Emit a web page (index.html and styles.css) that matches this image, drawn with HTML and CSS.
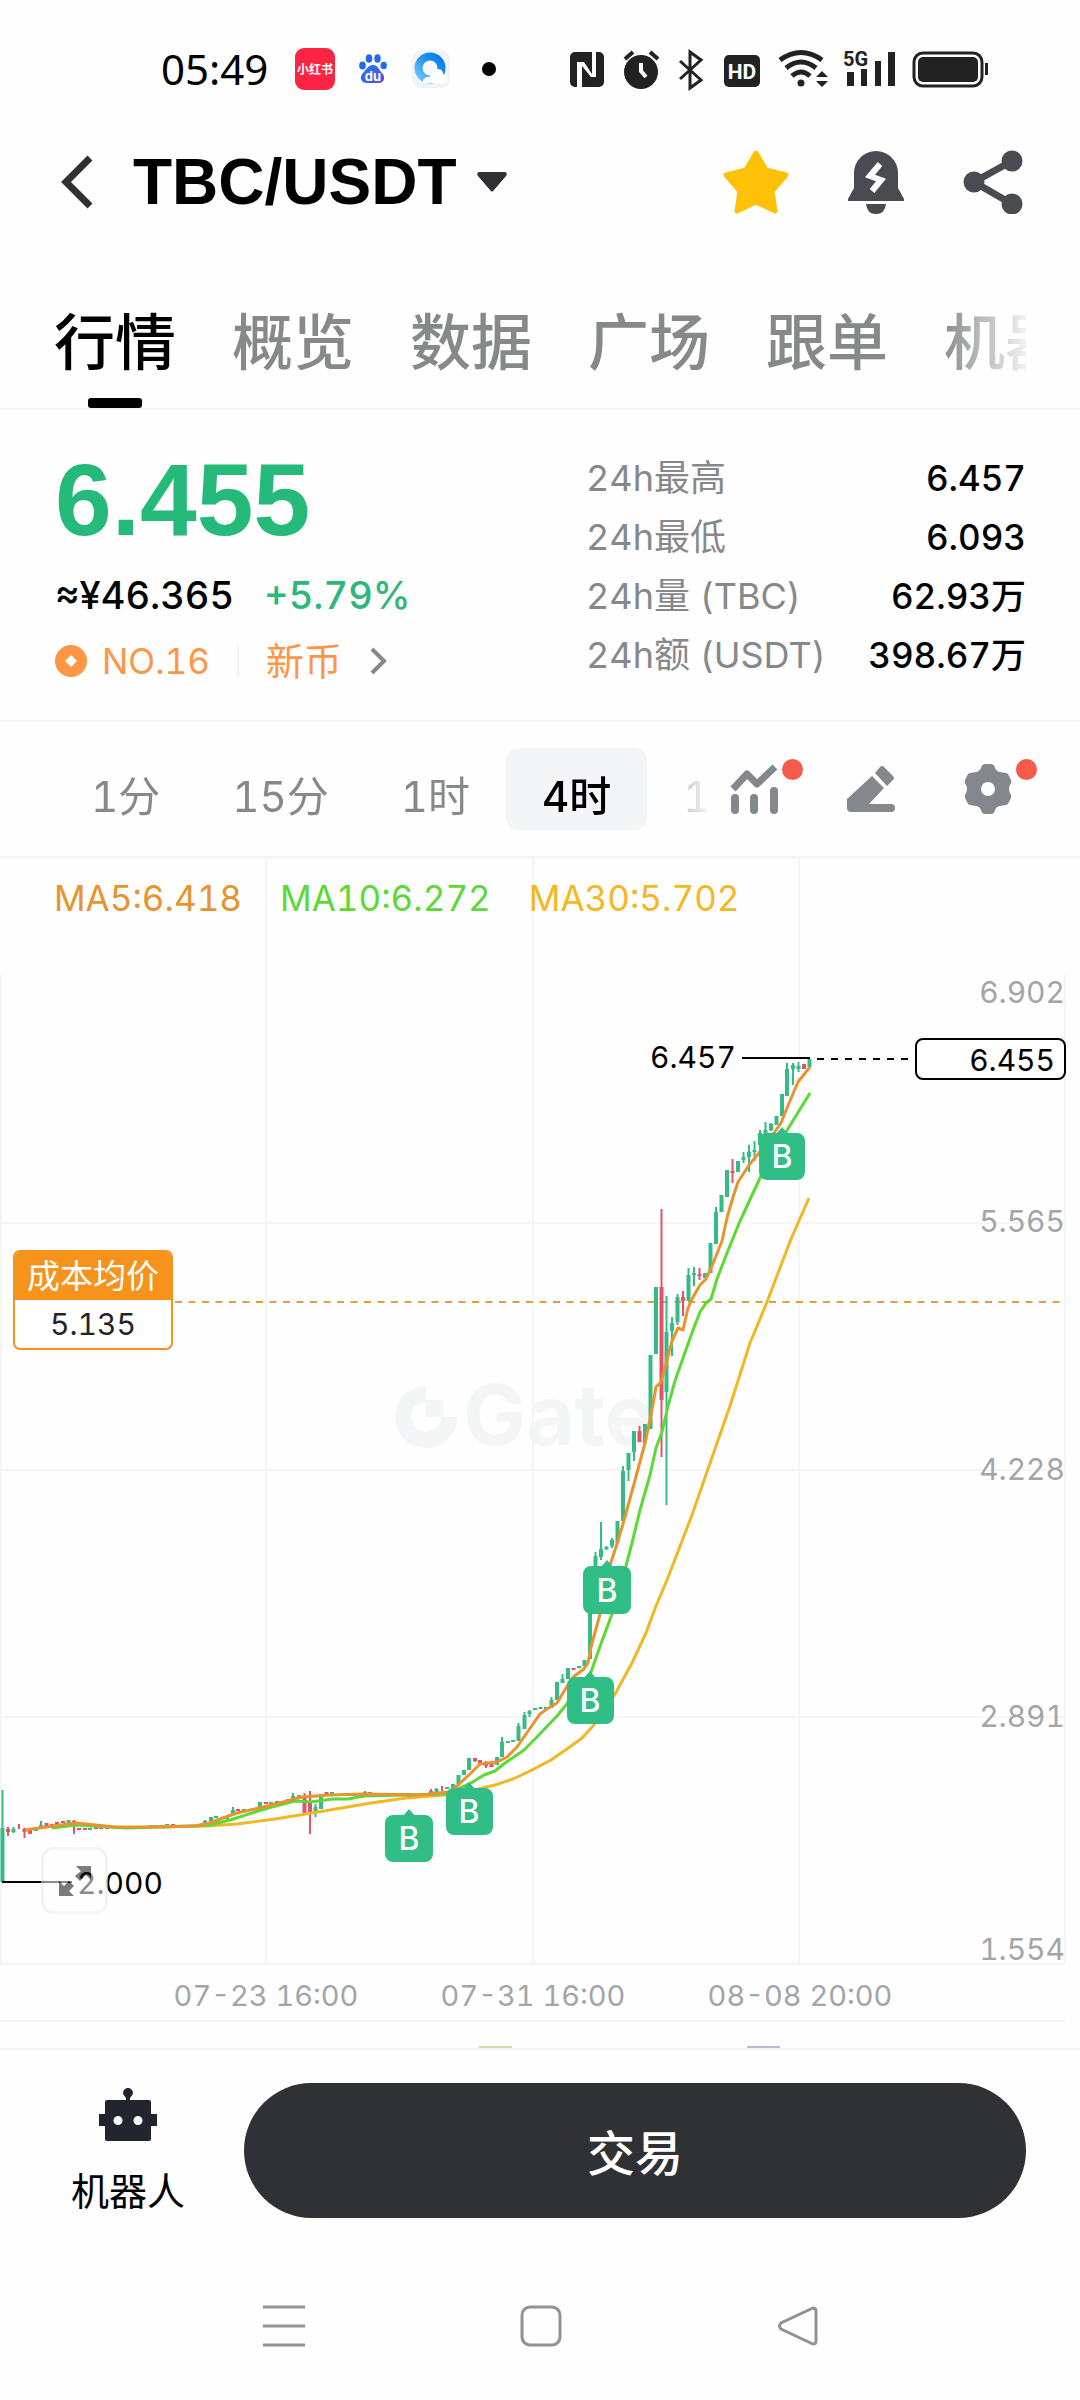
FILE: index.html
```html
<!DOCTYPE html>
<html lang="zh-CN">
<head>
<meta charset="utf-8">
<meta name="viewport" content="width=device-width, initial-scale=1">
<title>TBC/USDT</title>
<link rel="stylesheet" href="styles.css">
</head>
<body>
<div class="status">
  <div class="status-left">
    <time class="clock">05:49</time>
    <svg class="app-red" width="40" height="42" viewBox="0 0 40 42"><rect width="40" height="42" rx="9" fill="#fb2543"/><text x="20" y="26" text-anchor="middle" class="red-text">小红书</text></svg>
    <svg width="28" height="30" viewBox="0 0 28 30"><defs><linearGradient id="paw" x1="0" y1="0" x2="1" y2="1"><stop offset="0" stop-color="#1f7af0"/><stop offset="1" stop-color="#5a4be0"/></linearGradient></defs><g fill="#2468ee"><ellipse cx="3.5" cy="11.500" rx="3.300" ry="4"/><ellipse cx="10" cy="4.500" rx="3.300" ry="4.300"/><ellipse cx="18.500" cy="4.500" rx="3.200" ry="4.300"/><ellipse cx="24.700" cy="11.500" rx="3.200" ry="3.800"/></g><path d="M14 11c5 0 6 5 9 8 4 4 2 10-3 10H8c-6 0-8-6-4-10 3-3 5-8 10-8z" fill="url(#paw)"/><text x="14" y="27" text-anchor="middle" class="du-text">du</text></svg>
    <svg width="40" height="40" viewBox="0 0 40 40"><defs><linearGradient id="ring" x1="0" y1="1" x2="1" y2="0"><stop offset="0" stop-color="#6fc8fa"/><stop offset=".6" stop-color="#1f8fee"/><stop offset="1" stop-color="#0a7be6"/></linearGradient></defs><rect x="1" y="1" width="38" height="38" rx="9" fill="#f1f4f6"/><circle cx="19" cy="19" r="11.500" fill="#f6fafc" stroke="url(#ring)" stroke-width="8"/><path d="M12 33c0-4 4-6 7-5 1-5 4-8 8-8 4 0 5 3 5 5 6 1 6 9 0 9H15c-2 0-3-1-3-1z" fill="#fdfeff"/></svg>
    <i class="more-dot"></i>
  </div>
  <svg class="status-icons" width="420" height="46" viewBox="568 46 420 46" fill="#222">
    <path fill-rule="evenodd" d="M575 52h17v22l-8-12h-7v25h-2a5 5 0 0 1-5-5V57a5 5 0 0 1 5-5zM596 52h3a5 5 0 0 1 5 5v25a5 5 0 0 1-5 5h-17V66l9 11h5z"/>
    <circle cx="641" cy="72" r="17"/><path d="M641 63v8l5 6" fill="none" stroke="#fff" stroke-width="4"/><path d="M625 59l8-7M658 59l-8-7" stroke="#222" stroke-width="4"/>
    <path d="M680 61l21 19-11 8V52l11 8-21 19" fill="none" stroke="#222" stroke-width="3"/>
    <rect x="724" y="55" width="36" height="32" rx="5"/><text x="742" y="79" text-anchor="middle" class="hd-text">HD</text>
    <g fill="none" stroke="#222" stroke-width="5"><path d="M780 60q21-15 42 0"/><path d="M786 68q15-12 30 0"/><path d="M792 76q9-8 18 0"/></g><circle cx="801" cy="83" r="3.500"/><path d="M816 77l6-6 6 6zM816 81h12l-6 6z"/>
    <text x="843" y="66" class="net-text">5G</text><path d="M847 72h7v14h-7zM861 69h6v17h-6zM875 61h6v25h-6zM888 52h7v34h-7z"/>
    <rect x="914" y="53" width="68" height="33" rx="9" fill="none" stroke="#222" stroke-width="3"/><rect x="918" y="57" width="60" height="25" rx="5"/><rect x="985" y="63" width="3" height="12"/>
  </svg>
</div>

<header class="header">
  <button class="plain" aria-label="返回"><svg width="32" height="54" viewBox="0 0 32 54"><path d="M29 3L5 27l24 24" fill="none" stroke="#303134" stroke-width="7"/></svg></button>
  <button class="plain pair">TBC/USDT<svg width="30" height="21" viewBox="0 0 30 21"><path d="M2 0h26q3 1 1 4L17 18q-2 3-4 0L1 4Q-1 1 2 0z" fill="#303134"/></svg></button>
  <div class="header-tools">
    <button class="plain" aria-label="收藏"><svg width="66" height="64" viewBox="0 0 66 64"><path d="M33 3l10 17 20 5-14 16 3 20-19-9-19 9 3-20L3 25l20-5z" fill="#ffc107" stroke="#ffc107" stroke-width="5" stroke-linejoin="round"/></svg></button>
    <button class="plain" aria-label="提醒"><svg width="56" height="64" viewBox="0 0 56 64"><path d="M6 38V23a22 22 0 0 1 44 0v15l6 11v2H0v-2zM18 54h20q-1 10-10 10T18 54z" fill="#494b51"/><path d="M32 14L22 26l11 4-9 11" fill="none" stroke="#fff" stroke-width="6"/></svg></button>
    <button class="plain" aria-label="分享"><svg width="60" height="64" viewBox="0 0 60 64"><path d="M49 11L11 32l38 22" fill="none" stroke="#494b51" stroke-width="7"/><g fill="#494b51"><circle cx="11" cy="32" r="10.500"/><circle cx="49" cy="11" r="10.500"/><circle cx="49" cy="54" r="10.500"/></g></svg></button>
  </div>
</header>

<nav class="tabs">
  <div class="tabs-track">
    <a href="#" class="active">行情</a><a href="#">概览</a><a href="#">数据</a><a href="#">广场</a><a href="#">跟单</a><a href="#">机器人</a>
  </div>
</nav>

<section class="summary">
  <div>
    <div class="price">6.455</div>
    <div class="fiat"><span>≈¥46.365</span><span class="up">+5.79%</span></div>
    <a href="#" class="rank">
      <svg width="32" height="32" viewBox="0 0 32 32"><circle cx="16" cy="16" r="16" fill="#fd9645"/><path d="M16 10l6 6-6 6-6-6z" fill="#fff"/></svg>
      <span class="rank-no">NO.16</span><span class="rank-tag">新币</span>
      <svg width="18" height="28" viewBox="0 0 18 28"><path d="M2 2l12 12L2 26" fill="none" stroke="#85888c" stroke-width="4"/></svg>
    </a>
  </div>
  <dl class="stats">
    <div><dt>24h最高</dt><dd>6.457</dd></div>
    <div><dt>24h最低</dt><dd>6.093</dd></div>
    <div><dt>24h量 (TBC)</dt><dd>62.93万</dd></div>
    <div><dt>24h额 (USDT)</dt><dd>398.67万</dd></div>
  </dl>
</section>

<div class="intervals">
  <div class="interval-list">
    <button>1分</button><button>15分</button><button>1时</button><button class="active">4时</button><button>1日</button>
  </div>
  <div class="chart-tools">
    <button class="plain dotted" aria-label="指标"><svg width="48" height="50" viewBox="0 0 48 50"><g fill="none" stroke="#84878b" stroke-width="7"><path d="M3 25L17 10l10 10L45 3" stroke-linejoin="round"/><path d="M5 34v12M24 34v12M44 27v19" stroke-width="8" stroke-linecap="round"/></g></svg></button>
    <button class="plain" aria-label="画线"><svg width="48" height="50" viewBox="0 0 48 50"><path d="M25 12l12 12-15 16h22q4 0 4 4t-4 4H4q-4 0-4-4v-9zM28 9l5-6q2-2 4 0l9 9q2 2 0 4l-6 6z" fill="#84878b"/></svg></button>
    <button class="plain dotted" aria-label="设置"><svg width="48" height="50" viewBox="0 0 48 50"><path fill-rule="evenodd" d="M21 0h6q3 0 4 4 2 4 5 4l6 1q2 0 3 3l2 4q1 3-1 5-2 4 0 8 2 2 1 5l-2 4q-1 3-3 3l-6 1q-3 0-5 4-1 4-4 4h-6q-3 0-4-4-2-4-5-4l-6-1q-2 0-3-3l-2-4q-1-3 1-5 2-4 0-8-2-2-1-5l2-4q1-3 3-3l6-1q3 0 5-4 1-4 4-4zM24 18a7 7 0 1 0 0 14 7 7 0 0 0 0-14z" fill="#84878b"/></svg></button>
  </div>
</div>

<main class="chart">
  <svg class="plot" viewBox="0 859 1080 1189" role="img" aria-label="K线图">
    <g class="grid"><path d="M266 859V1964M533 859V1964M799 859V1964M1 975V1964M1065 975V1964M0 1223H1065M0 1470H1065M0 1717H1065M0 1964H1065M0 2021H1065"/></g>
    <g class="watermark"><path d="M426 1394a23 23 0 1 0 23 23" fill="none" stroke="#f3f5f6" stroke-width="16"/><path d="M426 1400h17v17h-17z" fill="#f3f5f6"/><text x="463" y="1445">Gate</text></g>
    <path d="M175 1302H1065" class="cost-line"/>
    <path class="wick up-c" d="M2.500 1790V1830M13.500 1827V1833M41 1821V1829M205 1820V1825M233 1807V1815M293 1793V1800M315.500 1804V1817M365 1791V1796M436.500 1788V1795M502 1737V1745M518.500 1723V1728M524.500 1712V1717M529.500 1710V1717M551.500 1697V1702M562.500 1674V1680M595.500 1552V1557M601 1522V1560M606.500 1546V1550M612 1538V1548M623 1466V1472M628.500 1468V1481M634 1450V1461M666.500 1296V1505M672 1317V1356M677.500 1294V1325M688.500 1268V1276M694 1267V1286M716 1207V1213M743.500 1152V1163M749 1145V1172M754.500 1141V1161M760 1130V1136M765.500 1122V1132M771 1123V1131M787 1063V1070M793 1063V1085M798.500 1062V1072"/>
    <path class="wick down-c" d="M8 1827V1836M19 1824V1829M24.500 1828V1838M74 1820V1834M304.500 1793V1814M310 1791V1834M431 1789V1795M442 1786V1791M475 1758V1762M486 1761V1768M639.500 1426V1433M661.500 1209V1457M683 1291V1316M699.500 1268V1280M732.500 1159V1183"/>
    <path class="body up-c" d="M2.500 1828V1882M13.500 1829V1832M36 1829V1831M41 1825V1829M68.500 1820V1823M90 1828V1830M118 1826V1828M123 1826V1828M151 1825V1827M156 1825V1827M167 1824V1826M189 1825V1827M205 1821V1825M211 1817V1821M216 1816V1818M227 1816V1819M233 1810V1815M244 1809V1811M260 1802V1809M271 1802V1804M282 1801V1803M288 1799V1801M293 1796V1799M299 1795V1797M315.500 1807V1812M321 1794V1809M332 1792V1795M348 1794V1796M359 1794V1796M365 1792V1796M381 1793V1795M398 1793V1795M420 1793V1796M436.500 1789V1794M447 1787V1789M453 1784V1788M458.500 1775V1784M464 1770V1775M469 1758V1770M497 1757V1765M502 1742V1757M508 1741V1743M513 1740V1742M518.500 1726V1741M524.500 1715V1729M529.500 1711V1714M535 1708V1710M540.500 1707V1709M546 1707V1709M551.500 1700V1708M557 1682V1700M562.500 1679V1683M568 1668V1679M579 1666V1668M584.500 1660V1666M590 1570V1659M595.500 1556V1570M601 1549V1557M606.500 1547V1549M612 1540V1546M617.500 1521V1543M623 1471V1521M628.500 1453V1470M634 1431V1452M645 1424V1443M650.500 1355V1429M656 1287V1354M666.500 1332V1392M672 1323V1331M677.500 1297V1322M688.500 1275V1301M694 1273V1275M705 1273V1278M710.500 1243V1273M716 1212V1244M721.500 1195V1212M727 1170V1197M738 1161V1172M743.500 1157V1160M749 1152V1157M754.500 1150V1152M760 1133V1145M765.500 1130V1134M771 1124V1130M776.500 1116V1125M782 1094V1116M787 1069V1096M793 1065V1069M798.500 1066V1069M809.500 1059V1067"/>
    <path class="body down-c" d="M8 1829V1832M24.500 1829V1832M30 1830V1834M46.500 1823V1826M52 1824V1826M57 1822V1825M63 1821V1823M74 1821V1826M79 1828V1830M85 1828V1830M96 1826V1829M101 1826V1829M107 1827V1829M129 1826V1828M134 1826V1828M145 1826V1828M162 1825V1827M173 1824V1826M184 1825V1827M222 1817V1819M238 1809V1811M250 1809V1811M266 1802V1804M277 1801V1803M304.500 1796V1813M310 1802V1812M326.500 1792V1795M337 1794V1796M343 1794V1796M354 1794V1796M370 1792V1795M376 1793V1795M387 1793V1795M403 1793V1795M409 1793V1797M414 1794V1796M431 1791V1794M475 1758V1761M480 1760V1764M486 1763V1766M491.500 1764V1767M573.500 1668V1670M639.500 1431V1442M661.500 1287V1400M683 1297V1301M699.500 1274V1276M732.500 1171V1173M804 1064V1069"/>
    <path class="ma ma30" d="M161 1827L207 1826 237 1824 275 1819 318 1812 371 1803 406 1798 444 1795 478 1789 495 1785 513 1779 532 1770 551 1760 567 1749 582 1738 593 1726 600 1716 615 1694 632 1663 646 1633 656 1606 667 1580 692 1515 708 1469 730 1406 750 1343 767 1302 791 1239 809 1198"/>
    <path class="ma ma10" d="M52 1828L76 1825 126 1828 191 1826 210 1825 230 1820 268 1808 295 1801 310 1802 333 1799 348 1799 364 1796 444 1794 455 1790 471 1783 484 1775 495 1771 505 1763 524 1750 536 1738 557 1716 566 1705 580 1687 591 1672 602 1641 612 1614 626 1566 632 1543 640 1510 650 1475 656 1448 662 1432 668 1406 675 1381 683 1358 693 1330 700 1312 706 1303 711 1299 717 1279 727 1253 740 1221 760 1178 786 1132 810 1093"/>
    <path class="ma ma5" d="M25 1830L54 1826 76 1823 115 1827 153 1827 195 1826 209 1823 237 1813 268 1806 302 1797 330 1795 364 1794 421 1795 448 1792 457 1786 471 1773 480 1764 497 1762 507 1757 517 1747 524 1737 540 1714 547 1709 557 1703 566 1688 573 1677 584 1669 588 1663 591 1647 600 1614 610 1565 617 1544 623 1524 634 1484 645 1443 651 1415 656 1387 661 1382 666 1364 672 1341 678 1328 683 1330 688 1308 692 1299 700 1285 706 1279 712 1266 722 1241 727 1218 733 1197 738 1182 749 1165 759 1153 774 1133 781 1123 787 1108 798 1082 810 1067"/>
    <g class="marker">
      <path d="M776 1134l6-7 6 7zM767 1133h30a8 8 0 0 1 8 8v31a8 8 0 0 1-8 8h-30a8 8 0 0 1-8-8v-31a8 8 0 0 1 8-8z"/><text x="782" y="1168">B</text>
      <path d="M601 1567l6-7 6 7zM591 1566h32a8 8 0 0 1 8 8v32a8 8 0 0 1-8 8h-32a8 8 0 0 1-8-8v-32a8 8 0 0 1 8-8z"/><text x="607" y="1602">B</text>
      <path d="M584 1678l6-7 6 7zM575 1677h31a8 8 0 0 1 8 8v31a8 8 0 0 1-8 8h-31a8 8 0 0 1-8-8v-31a8 8 0 0 1 8-8z"/><text x="590" y="1712">B</text>
      <path d="M463 1789l6-7 6 7zM454 1788h31a8 8 0 0 1 8 8v31a8 8 0 0 1-8 8h-31a8 8 0 0 1-8-8v-31a8 8 0 0 1 8-8z"/><text x="469" y="1823">B</text>
      <path d="M403 1816l6-7 6 7zM393 1815h32a8 8 0 0 1 8 8v31a8 8 0 0 1-8 8h-32a8 8 0 0 1-8-8v-31a8 8 0 0 1 8-8z"/><text x="409" y="1850">B</text>
    </g>
    <g class="peak"><path d="M742 1058H810M2 1882H72"/><path d="M817 1059H915" stroke-dasharray="7 7"/><text x="650" y="1068">6.457</text><text x="77" y="1894">2.000</text></g>
    <rect x="916" y="1039" width="149" height="40" rx="7" fill="#fff" stroke="#000" stroke-width="2"/><text x="1055" y="1071" class="last">6.455</text>
    <g class="axis-y"><text x="1065" y="1003">6.902</text><text x="1065" y="1232">5.565</text><text x="1065" y="1480">4.228</text><text x="1065" y="1727">2.891</text><text x="1065" y="1960">1.554</text></g>
    <g class="axis-x"><text x="266" y="2006">07-23 16:00</text><text x="533" y="2006">07-31 16:00</text><text x="800" y="2006">08-08 20:00</text></g>
    <path d="M479 2047h33" stroke="#d9d8a8" stroke-width="2"/><path d="M747 2047h33" stroke="#c3b4dd" stroke-width="2"/>
  </svg>
  <div class="legend"><span class="c5">MA5:6.418</span><span class="c10">MA10:6.272</span><span class="c30">MA30:5.702</span></div>
  <div class="cost"><div class="cost-name">成本均价</div><div class="cost-value">5.135</div></div>
  <button class="expand" aria-label="全屏"><svg width="32" height="32" viewBox="0 0 32 32" fill="#111"><path d="M17 1h15v14l-5-5-6 6-5-5 6-5zM0 16l5 5 5-5 5 5-5 5 5 5H0z"/></svg></button>
</main>

<footer class="trade-bar">
  <a href="#" class="bot"><svg width="58" height="54" viewBox="0 0 58 54"><path fill-rule="evenodd" d="M29 0a5 5 0 0 1 5 5q0 2-3 5v2h19q2 0 2 2v12h6v12h-6v13q0 2-2 2H8q-2 0-2-2V38H0V26h6V14q0-2 2-2h19v-2q-3-3-3-5a5 5 0 0 1 5-5zM19 28a4.500 4.500 0 1 0 0 9 4.500 4.500 0 0 0 0-9zM39 28a4.500 4.500 0 1 0 0 9 4.500 4.500 0 0 0 0-9z" fill="#22242f"/></svg><span>机器人</span></a>
  <button class="trade">交易</button>
</footer>
<div class="sys-nav">
  <button class="plain" aria-label="菜单"><svg width="42" height="42" viewBox="0 0 42 42"><path d="M0 2h42M0 21h42M0 40h42" stroke="#929292" stroke-width="3"/></svg></button>
  <button class="plain" aria-label="主页"><svg width="42" height="42" viewBox="0 0 42 42"><rect x="2" y="2" width="38" height="38" rx="8" fill="none" stroke="#929292" stroke-width="3"/></svg></button>
  <button class="plain" aria-label="后退"><svg width="42" height="42" viewBox="0 0 42 42"><path d="M36 3L4 18q-3 3 0 6l32 15q3 0 3-3V6q0-3-3-3z" fill="none" stroke="#929292" stroke-width="3"/></svg></button>
</div>
</body>
</html>
```
FILE: styles.css
```css
* { box-sizing: border-box; }
body { margin: 0; background: #fefefe; color: #000; font-family: Inter, "Noto Sans CJK SC", sans-serif; font-size: 36px; font-variant-numeric: tabular-nums; }
svg { display: block; flex: none; }
button { font: inherit; font-variant-numeric: inherit; color: inherit; border: 0; margin: 0; padding: 0; background: none; white-space: nowrap; cursor: pointer; }
a { color: inherit; text-decoration: none; }
dl, dd { margin: 0; }
.plain { display: flex; align-items: center; }

.status { height: 138px; padding: 0 92px 0 161px; display: flex; align-items: center; justify-content: space-between; }
.status-left { display: flex; align-items: center; }
.clock { font-family: "Noto Sans", sans-serif; font-size: 42px; line-height: 48px; margin-right: 27px; }
.status-left svg + svg { margin-left: 24px; }
.more-dot { width: 14px; height: 14px; border-radius: 50%; background: #000; margin-left: 31px; }
.red-text { font: 700 12px "Noto Sans CJK SC", sans-serif; fill: #fff; }
.du-text { font: 700 13px Inter, sans-serif; fill: #fff; }
.hd-text { font: 700 21px Roboto, sans-serif; fill: #fff; }
.net-text { font: 700 20px Roboto, sans-serif; fill: #222; }

.header { height: 88px; padding: 0 57px 0 61px; display: flex; align-items: center; }
.pair { margin-left: 40px; gap: 20px; font: 700 64px/82px "Liberation Sans", Arial, sans-serif; }
.header-tools { margin-left: auto; display: flex; gap: 59px; }

.tabs { padding: 68px 54px 0; border-bottom: 2px solid #f5f5f6; }
.tabs-track { display: flex; gap: 56px; overflow: hidden; font: 500 61px/90px "Noto Sans CJK SC", sans-serif; color: #86888a; mask-image: linear-gradient(to right, #000 calc(100% - 85px), transparent calc(100% + 10px)); }
.tabs a { flex: none; padding-bottom: 24px; position: relative; }
.tabs .active { color: #000; }
.tabs .active::after { content: ""; position: absolute; left: 34px; right: 34px; bottom: 0; height: 10px; border-radius: 3px; background: #000; }

.summary { padding: 39px 54px 35px 55px; display: flex; justify-content: space-between; border-bottom: 2px solid #f5f5f6; }
.price { font: 700 102px/102px "Liberation Sans", Arial, sans-serif; color: #25b97a; }
.fiat { display: flex; gap: 30px; margin-top: 20px; line-height: 48px; font-size: 38px; font-weight: 500; }
.up { color: #2fb67d; }
.rank { display: flex; align-items: center; margin-top: 18px; line-height: 48px; color: #fd9645; }
.rank-no { font-size: 35px; margin-left: 15px; padding-right: 27px; margin-right: 27px; line-height: 34px; border-right: 2px solid #f3f3f3; }
.rank-tag { font-size: 38px; margin-right: 28px; }
.stats { width: 440px; color: #86888a; }
.stats div { display: flex; justify-content: space-between; line-height: 59px; }
.stats dt { font-size: 36px; white-space: nowrap; }
.stats dd { color: #000; font-size: 35px; font-weight: 500; }

.intervals { height: 137px; padding: 0 68px 0 55px; display: flex; align-items: center; border-bottom: 3px solid #f5f5f6; }
.interval-list { flex: 1; min-width: 0; margin-right: 18px; display: flex; overflow: hidden; mask-image: linear-gradient(to right, #000 calc(100% - 60px), transparent); }
.interval-list button { flex: none; height: 82px; padding: 8px 36px 0; border-radius: 12px; font-size: 42px; color: #86888a; }
.interval-list .active { background: #f4f5f7; color: #000; font-weight: 500; }
.chart-tools { display: flex; gap: 69px; }
.dotted { position: relative; }
.dotted::after { content: ""; position: absolute; left: 52px; top: -5px; width: 21px; height: 21px; border-radius: 50%; background: #f65a49; }

.chart { position: relative; }
.plot { width: 100%; height: auto; }
.grid { fill: none; stroke: #f5f5f6; stroke-width: 2; }
.watermark text { font: 700 84px Inter, sans-serif; fill: #f3f5f6; }
.cost-line { stroke: #dda23c; stroke-width: 2; stroke-dasharray: 7 6.500; }
.wick { stroke-width: 2; fill: none; }
.body { stroke-width: 4; fill: none; }
.up-c { stroke: #36bb86; }
.down-c { stroke: #e2536a; }
.ma { fill: none; stroke-width: 3; stroke-linejoin: round; }
.ma5 { stroke: #e8932e; }
.ma10 { stroke: #5cd935; }
.ma30 { stroke: #f0b824; }
.marker { fill: #31be86; }
.marker text { font: 500 32px Inter, sans-serif; fill: #fff; text-anchor: middle; }
.peak { stroke: #000; stroke-width: 2; font-size: 30px; }
.peak text { stroke: none; }
.last { font-size: 30px; text-anchor: end; }
.axis-y { font-size: 30px; fill: #a3a5a8; text-anchor: end; }
.axis-x { font-size: 29px; fill: #a3a5a8; text-anchor: middle; }
.legend { position: absolute; left: 54px; top: 15px; display: flex; gap: 38px; font-size: 35px; line-height: 48px; }
.c5 { color: #e8932e; }
.c10 { color: #5cd935; }
.c30 { color: #f5b722; }
.cost { position: absolute; left: 13px; top: 391px; width: 160px; border: 2px solid #f6931d; border-radius: 7px; background: #fff; overflow: hidden; text-align: center; }
.cost-name { background: #f6931d; color: #fff; font-size: 33px; line-height: 48px; white-space: nowrap; }
.cost-value { font-size: 30px; line-height: 48px; color: #22242a; }
.expand { position: absolute; left: 41px; top: 988px; width: 67px; height: 67px; display: flex; align-items: center; justify-content: center; border: 3px solid #ececec; border-radius: 12px; background: #fff; opacity: .55; }

.trade-bar { display: flex; align-items: center; gap: 42px; padding: 32px 54px 0; border-top: 2px solid #f3f3f3; }
.bot { width: 148px; padding-top: 6px; display: flex; flex-direction: column; align-items: center; gap: 22px; font-size: 38px; line-height: 54px; }
.trade { flex: 1; height: 135px; border-radius: 68px; background: #303134; color: #fff; font-size: 48px; font-weight: 500; }
.sys-nav { padding: 87px 154px 54px 156px; display: grid; grid-template-columns: repeat(3, 1fr); justify-items: center; }
```
